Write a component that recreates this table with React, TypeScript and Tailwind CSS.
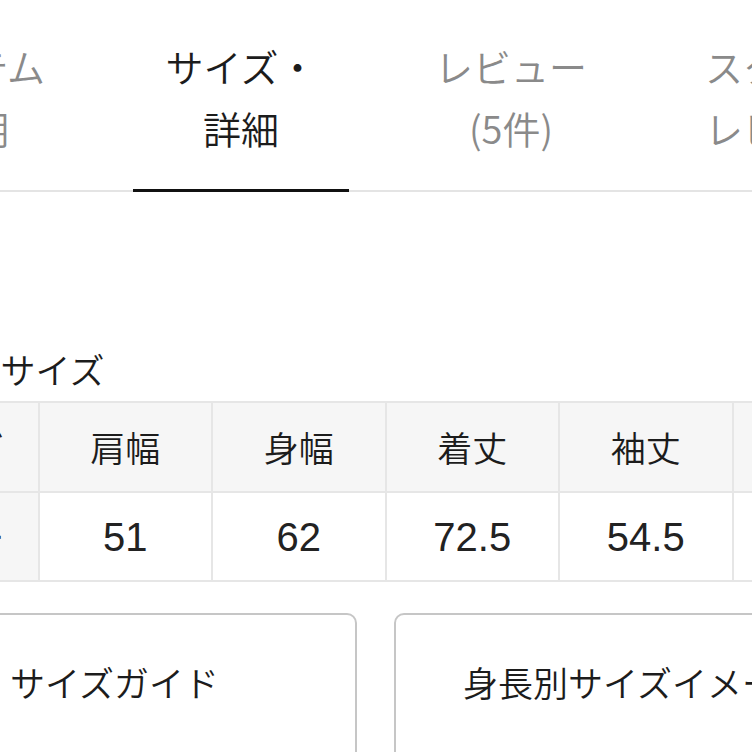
export default function App() {
    const tabs = [
        { l1: "アイテム", l2: "説明", active: false },
        { l1: "サイズ・", l2: "詳細", active: true },
        { l1: "レビュー", l2: "(5件)", active: false },
        { l1: "スタッフ", l2: "レビュー", active: false },
    ]
    const heads = ["サイズ", "肩幅", "身幅", "着丈", "袖丈", "裄丈"]
    const values = ["フリー", "51", "62", "72.5", "54.5", "80"]

    return (
        <div className="w-[752px] h-[752px] overflow-hidden bg-white text-[#1c1c1c] font-[350]" style={{ fontFamily: '"Noto Sans CJK JP", "Noto Sans", sans-serif' }}>
            <div className="flex border-b-2 border-[#e4e4e4]">
                <div className="flex ml-[-164px] mb-[-2px]">
                    {tabs.map((t) => (
                        <div key={t.l1} className="w-[270px] shrink-0 px-[27px]">
                            <div className={`flex flex-col items-center pt-[35px] pb-[30px] border-b-[3px] text-[38px] leading-[62px] ${t.active ? "border-[#111] text-[#1c1c1c]" : "border-transparent text-[#8a8a8a]"}`}>
                                <span className="whitespace-nowrap">{t.l1}</span>
                                <span className="whitespace-nowrap">{t.l2}</span>
                            </div>
                        </div>
                    ))}
                </div>
            </div>

            <div className="mt-[155px] ml-[-136px] text-[35px] leading-[44px] whitespace-nowrap">アイテムサイズ</div>

            <table className="mt-[10px] ml-[-136px] w-[1041px] min-w-[1041px] table-fixed border-collapse">
                <tbody>
                    <tr className="h-[90px] bg-[#f6f6f6]">
                        {heads.map((h) => (
                            <th key={h} className="w-[173.5px] border-2 border-[#e6e6e6] text-[35px] font-[350] text-center whitespace-nowrap">{h}</th>
                        ))}
                    </tr>
                    <tr className="h-[89px]">
                        {values.map((v, i) => (
                            <td key={v} className={`w-[173.5px] border-2 border-[#e6e6e6] text-center whitespace-nowrap ${i === 0 ? "bg-[#f6f6f6] text-[35px]" : "bg-white text-[40px] font-normal text-[#222]"}`} style={i === 0 ? undefined : { fontFamily: '"Liberation Sans", Arial, sans-serif' }}>{v}</td>
                        ))}
                    </tr>
                </tbody>
            </table>

            <div className="flex gap-[37px] mt-[31px] ml-[-59px]">
                <div className="w-[416px] h-[150px] shrink-0 flex items-center pl-[67px] pb-[12px] border-2 border-[#c6c6c6] rounded-[10px] text-[35px] whitespace-nowrap">サイズガイド</div>
                <div className="w-[416px] h-[150px] shrink-0 flex items-center pl-[67px] pb-[12px] border-2 border-[#c6c6c6] rounded-[10px] text-[35px] whitespace-nowrap">身長別サイズイメージ</div>
            </div>
        </div>
    )
}
